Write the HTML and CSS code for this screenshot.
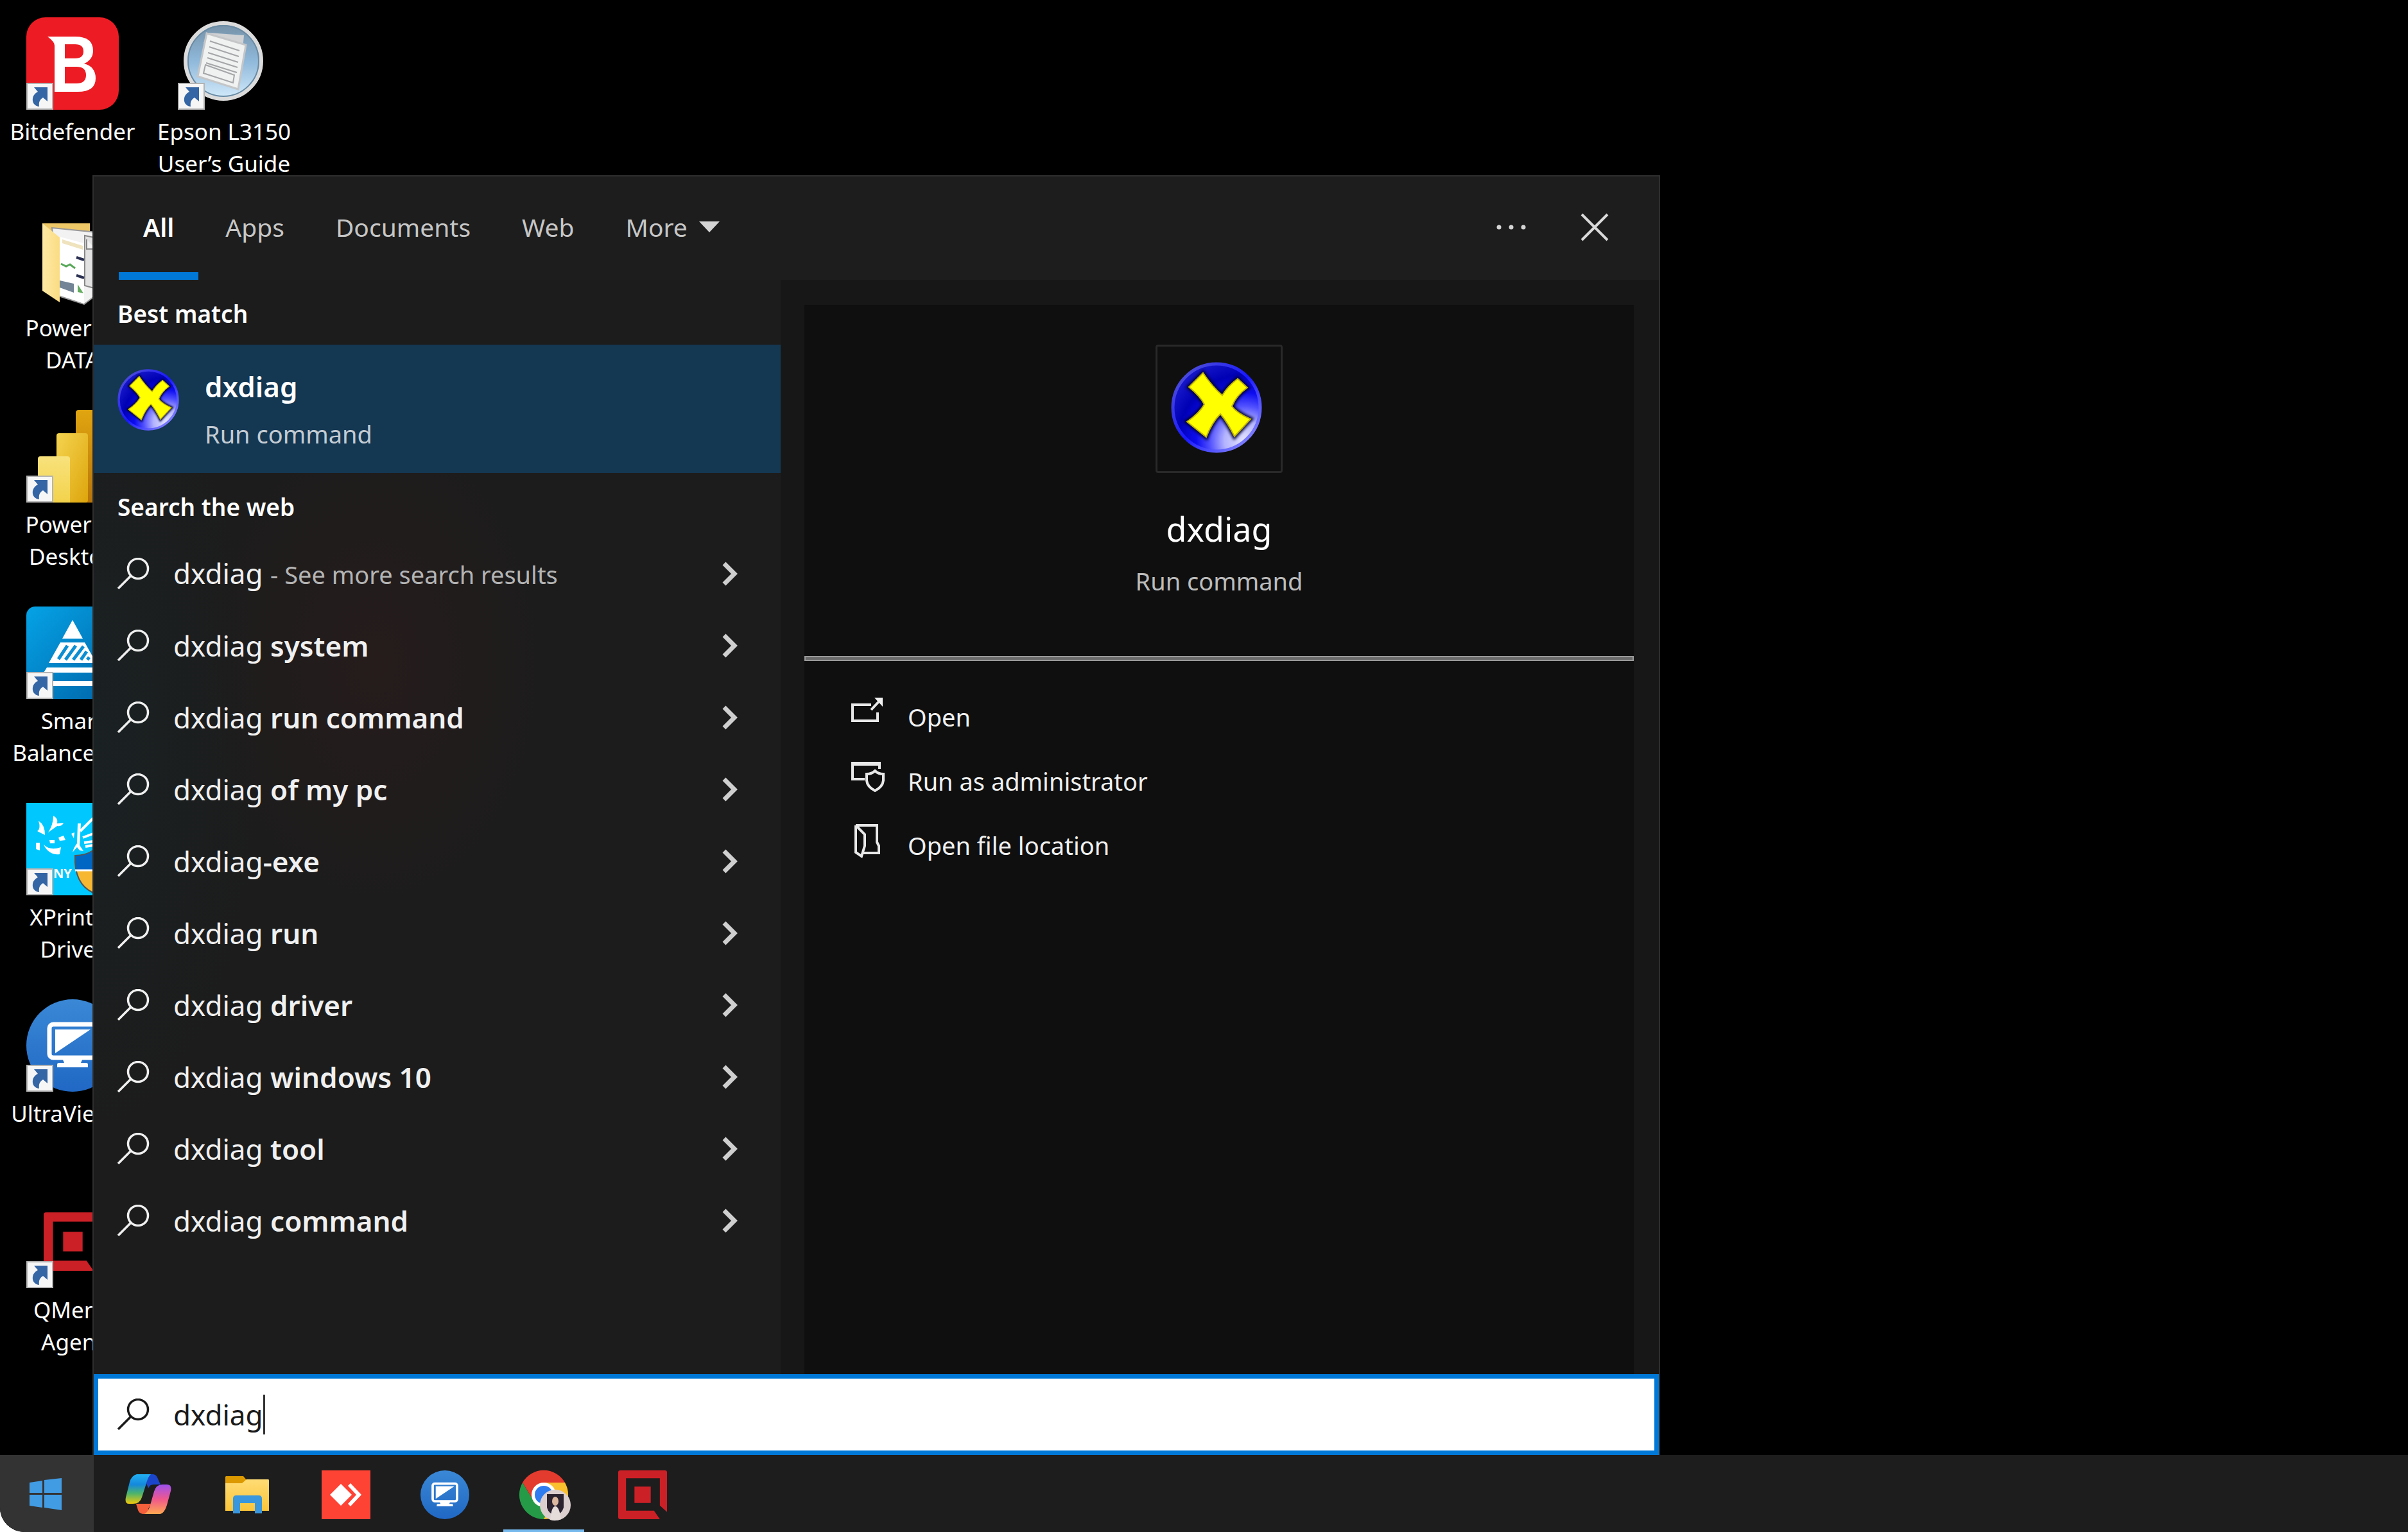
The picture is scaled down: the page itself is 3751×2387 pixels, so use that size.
FILE: index.html
```html
<!DOCTYPE html>
<html lang="en">
<head>
<meta charset="utf-8">
<title>Windows Search</title>
<link rel="stylesheet" href="styles.css">
</head>
<body>
<svg class="defs" aria-hidden="true">
  <defs>
    <radialGradient id="ball" cx=".82" cy=".88" r=".95">
      <stop offset="0" stop-color="#e4e4ff"/><stop offset=".24" stop-color="#b4b4ff"/>
      <stop offset=".42" stop-color="#5050ff"/><stop offset=".58" stop-color="#0c0cf0"/>
      <stop offset=".8" stop-color="#0000b4"/><stop offset="1" stop-color="#1414c8"/>
    </radialGradient>
    <linearGradient id="rim" x1="0" y1="0" x2="1" y2="1">
      <stop offset="0" stop-color="#5a5ad0"/><stop offset=".5" stop-color="#1818ff"/><stop offset="1" stop-color="#a0a0ff"/>
    </linearGradient>
    <filter id="soft" x="-20%" y="-20%" width="140%" height="140%"><feGaussianBlur stdDeviation="2"/></filter>
    <linearGradient id="uv" x1="0" y1="0" x2="0" y2="1"><stop offset="0" stop-color="#3a88d6"/><stop offset="1" stop-color="#2068c4"/></linearGradient>
    <linearGradient id="sb" x1="0" y1="0" x2="1" y2="1"><stop offset="0" stop-color="#05a3e6"/><stop offset="1" stop-color="#0064a8"/></linearGradient>
    <linearGradient id="bar1" x1="0" y1="0" x2="0" y2="1"><stop offset="0" stop-color="#f8e27c"/><stop offset="1" stop-color="#f3d24b"/></linearGradient>
    <linearGradient id="bar2" x1="0" y1="0" x2="1" y2="1"><stop offset="0" stop-color="#f5d450"/><stop offset="1" stop-color="#dda50c"/></linearGradient>
    <linearGradient id="bar3" x1="0" y1="0" x2="0" y2="1"><stop offset="0" stop-color="#e0a510"/><stop offset="1" stop-color="#b8740a"/></linearGradient>
    <linearGradient id="fold" x1="0" y1="0" x2="0" y2="1"><stop offset="0" stop-color="#ffdc74"/><stop offset="1" stop-color="#fbc53a"/></linearGradient>
    <linearGradient id="flap" x1="0" y1="0" x2="1" y2="0"><stop offset="0" stop-color="#fde9a4"/><stop offset="1" stop-color="#fbdc84"/></linearGradient>
    <linearGradient id="lens" x1="0" y1="0" x2="0" y2="1"><stop offset="0" stop-color="#7591a6"/><stop offset=".5" stop-color="#8fb8da"/><stop offset="1" stop-color="#d3ebfb"/></linearGradient>
    <linearGradient id="cpL" x1="0" y1="0" x2="0" y2="1"><stop offset="0" stop-color="#22b0f4"/><stop offset=".35" stop-color="#1488dc"/><stop offset=".65" stop-color="#4cb46c"/><stop offset="1" stop-color="#f0c80c"/></linearGradient>
    <linearGradient id="cpR" x1="0" y1="0" x2="0" y2="1"><stop offset="0" stop-color="#9c50ee"/><stop offset=".5" stop-color="#f0588c"/><stop offset="1" stop-color="#ffa850"/></linearGradient>
    <symbol id="shortcut" viewBox="0 0 42 42">
      <rect x="1" y="1" width="40" height="40" fill="#f6f6f6" stroke="#b4b4b4" stroke-width="2"/>
      <path d="M12 7h21v22l-7-6c-5 3-7 7-6 14C12 36 9 30 10 24c1-5 4-8 8-10z" fill="#3465a4"/>
    </symbol>
    <symbol id="search" viewBox="0 0 50 50">
      <circle cx="32" cy="17" r="15.500" fill="none" stroke="currentColor" stroke-width="3.500"/>
      <path d="M21 28L1 48" fill="none" stroke="currentColor" stroke-width="3.500"/>
    </symbol>
    <symbol id="chevron" viewBox="0 0 26 38"><path d="M4 3l16 16L4 35" fill="none" stroke="#cfcfcf" stroke-width="7"/></symbol>
    <symbol id="dx" viewBox="0 0 142 142">
      <circle cx="71" cy="71" r="68" fill="url(#ball)" stroke="url(#rim)" stroke-width="5"/>
      <path d="M50 17L28 39Q46 54 52 66Q44 80 25 93L55 117Q64 94 77 81Q88 94 99 116L124 89Q102 79 95 69Q102 52 119 40L104 26Q88 38 80 52Q64 38 50 17Z" fill="#00003c" stroke="#00003c" stroke-width="7" filter="url(#soft)"/>
      <path d="M50 17L28 39Q46 54 52 66Q44 80 25 93L55 117Q64 94 77 81Q88 94 99 116L124 89Q102 79 95 69Q102 52 119 40L104 26Q88 38 80 52Q64 38 50 17Z" fill="#ffff00" stroke="#c0b400" stroke-width="2"/>
    </symbol>
    <symbol id="ultra" viewBox="0 0 144 144">
      <circle cx="72" cy="72" r="72" fill="url(#uv)"/>
      <rect x="36" y="39" width="72" height="52" rx="6" fill="none" stroke="#fff" stroke-width="7"/>
      <path d="M45 47H100L45 84ZM56 92H88L85 99H93Q96 99 96 102V106H48V102Q48 99 51 99H59Z" fill="#fff"/>
    </symbol>
    <symbol id="qm" viewBox="0 0 75 75">
      <path d="M3 0H72Q75 0 75 3V64L64 54V12H12V62H55L64 75H3Q0 75 0 72V3Q0 0 3 0ZM25 25H50V50H25Z" fill="#cc2027"/>
    </symbol>
  </defs>
</svg>

<div class="screen">
  <main class="desktop">
    <ul class="icons">
      <li class="shortcut">
        <svg class="pic" viewBox="0 0 144 144"><rect width="144" height="144" rx="30" fill="#ed1c24"/>
          <path fill-rule="evenodd" fill="#fff" d="M33 30H76Q104 30 104 52Q104 66 90 72Q108 77 108 95Q108 116 80 116H44V44Q44 38 33 30ZM60 42V64H76Q89 64 89 53Q89 42 76 42ZM60 77V103H78Q93 103 93 90Q93 77 78 77Z"/>
          <use href="#shortcut" x="0" y="102" width="42" height="42"/></svg>
        <span>Bitdefender</span>
      </li>
      <li class="shortcut">
        <svg class="pic" viewBox="0 0 144 144">
          <path d="M25 15H99V130L25 120Z" fill="#eec766"/>
          <path d="M40 22L120 30V118L90 141L50 128Z" fill="#f2f2f2" stroke="#999" stroke-width="2"/>
          <path d="M91 34L120 40V120L91 112ZM94 40V55H108" fill="#e2e2e2" stroke="#888" stroke-width="2"/>
          <path d="M52 36L90 46V140L50 126Z" fill="#fff"/>
          <path d="M56 40L88 50V56L56 46Z" fill="#eee3bd"/>
          <path d="M54 78l8 4 6-3 8 6" stroke="#58a858" stroke-width="3" fill="none"/>
          <path d="M78 68l12 4M78 96l12 4" stroke="#2a3050" stroke-width="4"/>
          <path d="M52 104l22 5v14l-22-8z" fill="#728496"/><path d="M80 110l9 14-9-2z" fill="#64ac60"/>
          <path d="M25 15L52 37V138L25 120Z" fill="url(#flap)"/></svg>
        <span>Power BI<br>DATA</span>
      </li>
      <li class="shortcut">
        <svg class="pic" viewBox="0 0 144 144"><rect x="77" width="49" height="144" rx="4" fill="url(#bar3)"/>
          <rect x="47" y="36" width="49" height="108" rx="4" fill="url(#bar2)"/>
          <path d="M22 72h42q4 0 4 4v68H18V76q0-4 4-4z" fill="url(#bar1)"/>
          <use href="#shortcut" x="0" y="102" width="42" height="42"/></svg>
        <span>Power BI<br>Desktop</span>
      </li>
      <li class="shortcut">
        <svg class="pic" viewBox="0 0 144 144"><rect width="144" height="144" rx="14" fill="url(#sb)"/>
          <path d="M72 21L88 50H56ZM53 56H91L109 88H35ZM32 95H112L116 103H27ZM20 116H124V124H20Z" fill="#fff"/>
          <path d="M50 82L64 61M61 83L77 61M73 83L89 62M85 83L94 70M95 83l3-4" stroke="#0c8fd2" stroke-width="5"/>
          <use href="#shortcut" x="0" y="102" width="42" height="42"/></svg>
        <span>Smart<br>Balance 2.0</span>
      </li>
      <li class="shortcut">
        <svg class="pic" viewBox="0 0 144 144"><rect width="144" height="144" fill="#00c8ff"/>
          <g fill="#fff"><path d="M19 28q10 6 10 22l-12-6q6-4 2-16zM42 20q8 4 6 12l10-1q-2 6-10 5l-14 10q8-12 8-26zM15 62l6 0v12l-6-2zM27 65q10 10 27 4l-2 11q-17 2-25-15zM36 58l8 0v5h-7zM50 54l8-3 3 7-9 1zM70 48l5-2-1 9zM80 32l5 0-2 34 6 9-6-1-4-5-7 8q2-8 7-14z"/></g>
          <path d="M84 44L104 24M88 54L104 48M90 62L104 60M92 68L104 66" stroke="#fff" stroke-width="4"/>
          <text class="brand" x="42" y="117">NY</text>
          <path d="M76 82Q92 82 104 74Q116 82 136 82V106H76Z" fill="#0066c4"/><path d="M78 106H134Q128 130 104 140Q84 132 78 106Z" fill="#f7b731"/>
          <path d="M76 82Q92 82 104 74Q116 82 136 82Q138 124 104 140Q74 126 76 82Z" fill="none" stroke="#555" stroke-width="2"/><path d="M76 105H104" stroke="#fff" stroke-width="3"/>
          <use href="#shortcut" x="0" y="102" width="42" height="42"/></svg>
        <span>XPrinter<br>Driver</span>
      </li>
      <li class="shortcut">
        <svg class="pic" viewBox="0 0 144 144"><use href="#ultra"/><use href="#shortcut" x="0" y="102" width="42" height="42"/></svg>
        <span>UltraViewer</span>
      </li>
      <li class="shortcut">
        <svg class="pic" viewBox="0 0 144 144"><use href="#qm" x="27" y="26" width="91" height="91"/><use href="#shortcut" x="0" y="102" width="42" height="42"/></svg>
        <span>QMenu<br>Agent</span>
      </li>
      <li class="shortcut">
        <svg class="pic" viewBox="0 0 144 144"><circle cx="71" cy="68" r="59" fill="url(#lens)" stroke="#dcdcdc" stroke-width="6"/>
          <circle cx="71" cy="68" r="55" fill="none" stroke="#6a8ba4" stroke-width="2"/>
          <path d="M48 24L103 28L100 60L40 40Z" fill="#d0d2d4"/><path d="M45 25L106 43L94 112L31 92Z" fill="#f0f1f1" stroke="#c4c6c8" stroke-width="3"/>
          <path d="M50 37L96 52M49 46L95 61M47 55L94 70M46 63L93 78M44 71L92 86M43 74L88 90L86 102L40 87Z" fill="none" stroke="#a4a6a8" stroke-width="2"/>
          <use href="#shortcut" x="0" y="102" width="42" height="42"/></svg>
        <span>Epson L3150<br>User’s Guide</span>
      </li>
    </ul>

    <section class="panel" aria-label="Search">
      <header class="head">
        <nav class="tabs">
          <button class="tab active">All</button>
          <button class="tab">Apps</button>
          <button class="tab">Documents</button>
          <button class="tab">Web</button>
          <button class="tab">More <svg class="tri" viewBox="0 0 32 18"><path d="M0 0H32L16 17Z" fill="#d4d4d4"/></svg></button>
        </nav>
        <button class="tool" aria-label="Options"><svg class="dots" viewBox="0 0 48 48" fill="#d4d4d4"><circle cx="5" cy="24" r="3.500"/><circle cx="24" cy="24" r="3.500"/><circle cx="43" cy="24" r="3.500"/></svg></button>
        <button class="tool" aria-label="Close"><svg class="dots" viewBox="0 0 48 48"><path d="M4 4L44 44M44 4L4 44" stroke="#dadada" stroke-width="4"/></svg></button>
      </header>

      <div class="body">
        <div class="results">
          <h2 class="group">Best match</h2>
          <a class="best" href="#dxdiag">
            <svg class="best-pic" viewBox="0 0 142 142"><use href="#dx"/></svg>
            <span class="best-text"><strong>dxdiag</strong><span>Run command</span></span>
          </a>
          <h2 class="group">Search the web</h2>
          <ul class="web">
            <li><a href="#q0"><svg class="glass"><use href="#search"/></svg><span>dxdiag <small>- See more search results</small></span></a><button aria-label="Preview"><svg class="chev"><use href="#chevron"/></svg></button></li>
            <li><a href="#q1"><svg class="glass"><use href="#search"/></svg><span>dxdiag <b>system</b></span></a><button aria-label="Preview"><svg class="chev"><use href="#chevron"/></svg></button></li>
            <li><a href="#q2"><svg class="glass"><use href="#search"/></svg><span>dxdiag <b>run command</b></span></a><button aria-label="Preview"><svg class="chev"><use href="#chevron"/></svg></button></li>
            <li><a href="#q3"><svg class="glass"><use href="#search"/></svg><span>dxdiag <b>of my pc</b></span></a><button aria-label="Preview"><svg class="chev"><use href="#chevron"/></svg></button></li>
            <li><a href="#q4"><svg class="glass"><use href="#search"/></svg><span>dxdiag<b>-exe</b></span></a><button aria-label="Preview"><svg class="chev"><use href="#chevron"/></svg></button></li>
            <li><a href="#q5"><svg class="glass"><use href="#search"/></svg><span>dxdiag <b>run</b></span></a><button aria-label="Preview"><svg class="chev"><use href="#chevron"/></svg></button></li>
            <li><a href="#q6"><svg class="glass"><use href="#search"/></svg><span>dxdiag <b>driver</b></span></a><button aria-label="Preview"><svg class="chev"><use href="#chevron"/></svg></button></li>
            <li><a href="#q7"><svg class="glass"><use href="#search"/></svg><span>dxdiag <b>windows 10</b></span></a><button aria-label="Preview"><svg class="chev"><use href="#chevron"/></svg></button></li>
            <li><a href="#q8"><svg class="glass"><use href="#search"/></svg><span>dxdiag <b>tool</b></span></a><button aria-label="Preview"><svg class="chev"><use href="#chevron"/></svg></button></li>
            <li><a href="#q9"><svg class="glass"><use href="#search"/></svg><span>dxdiag <b>command</b></span></a><button aria-label="Preview"><svg class="chev"><use href="#chevron"/></svg></button></li>
          </ul>
        </div>

        <div class="preview">
          <article class="card">
            <div class="hero">
              <div class="frame"><svg class="hero-pic" viewBox="0 0 142 142"><use href="#dx"/></svg></div>
              <h1>dxdiag</h1>
              <p>Run command</p>
            </div>
            <hr>
            <div class="actions">
              <button><svg class="act" viewBox="0 0 54 54"><path d="M32 14H3V39H42V26M32 22L46 7" /><path d="M37 3H50V17Z" fill="#f0f0f0" stroke="none"/></svg>Open</button>
              <button><svg class="act" viewBox="0 0 54 54"><path d="M22 30H3V5H45V14M3 7H45M38 17Q43 22 51 22V32Q50 42 38 48Q26 42 25 32V22Q33 22 38 17Z"/></svg>Run as administrator</button>
              <button><svg class="act" viewBox="0 0 54 54"><path d="M8 2H41V28L44 34V45H20M8 2L22 16V34L17 50L8 44V2"/></svg>Open file location</button>
            </div>
          </article>
        </div>
      </div>

      <label class="searchbox">
        <svg class="glass"><use href="#search"/></svg>
        <input type="text" value="dxdiag" aria-label="Type here to search"><span class="caret"></span>
      </label>
    </section>
  </main>

  <footer class="taskbar">
    <button class="start" aria-label="Start"><svg width="50" height="50" viewBox="0 0 50 50" fill="#429ce3"><path d="M0 7L20 4V23H0ZM23 3L50 0V23H23ZM0 26H20V46L0 43ZM23 26H50V50L23 46Z"/></svg></button>
    <button class="app" aria-label="Copilot"><svg width="72" height="64" viewBox="0 0 72 64">
      <path d="M36 0H42Q48 0 50 5L55 16H44Q38 16 36 22L33 14Z" fill="#1b46cc"/>
      <path d="M36 62H30Q22 62 20 56L17 46L40 46L36 54Z" fill="#f4603c"/>
      <path d="M18 0H40Q36 3 33 14L26 36Q23 46 12 46H6Q-1 46 1 36L7 12Q10 2 18 0Z" fill="url(#cpL)"/>
      <path d="M54 62H30Q36 59 39 48L45 27Q48 16 58 16H65Q73 16 71 26L65 48Q61 61 54 62Z" fill="url(#cpR)"/></svg></button>
    <button class="app" aria-label="File Explorer"><svg width="70" height="60" viewBox="0 0 70 60">
      <path d="M2 1H29L35 8V18H1V2Z" fill="#dc9a00"/><path d="M1 12H27L34 6H68Q69 6 69 8V55H1Z" fill="url(#fold)"/>
      <path d="M13 59V36Q13 31 18 31H53Q58 31 58 36V59H47V43H24V59Z" fill="#3b97dd"/></svg></button>
    <button class="app" aria-label="AnyDesk"><svg width="76" height="76" viewBox="0 0 76 76"><rect width="76" height="76" fill="#fe4335"/>
      <path d="M13 38L30 21L47 38L30 55ZM41 24L45 20L62 38L45 56L41 52L54 38Z" fill="#fff"/></svg></button>
    <button class="app" aria-label="UltraViewer"><svg width="76" height="76"><use href="#ultra"/></svg></button>
    <button class="app running" aria-label="Google Chrome"><svg width="84" height="84" viewBox="0 0 84 84">
      <path d="M42 42H75A38 38 0 0 1 42 80Z" fill="#fbc02d"/><path d="M42 23H75A38 38 0 0 1 42 80L58 51Z" fill="#fbc02d"/><path d="M42 61L26 51L9 23A38 38 0 0 0 42 80L58 51Z" fill="#259b48"/>
      <path d="M9 23A38 38 0 0 1 75 23H42L26 51Z" fill="#e33b2e"/><circle cx="42" cy="42" r="19" fill="#fff"/><circle cx="42" cy="42" r="14" fill="#2f7bf0"/>
      <circle cx="60" cy="58" r="24" fill="#dccfcf"/><path d="M47 41H73V62Q70 72 60 74Q50 72 47 62Z" fill="#2b2430"/><ellipse cx="60" cy="52" rx="5" ry="7" fill="#dcb8a0"/><path d="M52 81Q54 60 60 60Q66 60 69 80Q60 84 52 81Z" fill="#e6dcda"/></svg></button>
    <button class="app" aria-label="QMenu Agent"><svg width="76" height="76"><use href="#qm"/></svg></button>
  </footer>
</div>
</body>
</html>
```
FILE: styles.css
```css
* { box-sizing: border-box; }

body {
  margin: 0;
  background: #fff;
  color: #f0f0f0;
  font: 38px/50px "Noto Sans", "Open Sans", sans-serif;
}

ul { margin: 0; padding: 0; list-style: none; }
h1, h2, p { margin: 0; font-weight: 400; }
a { color: inherit; text-decoration: none; }
button { border: 0; padding: 0; background: none; color: inherit; font: inherit; }
svg { display: block; flex: none; }
.defs { position: absolute; width: 0; height: 0; }

.screen {
  display: flex;
  flex-direction: column;
  min-height: 100vh;
  overflow: hidden;
  border-radius: 0 0 0 38px;
  background: #000;
}

.desktop { position: relative; flex: 1; }

/* Desktop shortcuts */
.icons {
  display: grid;
  grid-auto-flow: column;
  grid-template-rows: repeat(7, 306px);
  grid-auto-columns: 226px;
  justify-content: start;
  column-gap: 10px;
  padding-top: 27px;
}
.shortcut {
  display: flex;
  flex-direction: column;
  align-items: center;
  gap: 9px;
  color: #fff;
  font-size: 35px;
  text-align: center;
  white-space: nowrap;
}
.pic { width: 144px; height: 144px; }
.brand { fill: #fff; font: 700 20px "Noto Sans", sans-serif; }

/* Search flyout, floating over the desktop */
.panel {
  position: absolute;
  top: 273px;
  bottom: 0;
  left: 144px;
  display: flex;
  flex-direction: column;
  width: min(2442px, calc(100vw - 144px));
  border: 2px solid #2e2e2e;
  border-bottom: 0;
  background: #1c1c1c;
}

.head {
  display: flex;
  align-items: center;
  height: 161px;
  padding: 0 54px 0 39px;
  background: #1d1d1d;
}
.tabs { display: flex; flex: 1; gap: 4px; height: 100%; }
.tab {
  display: flex;
  align-items: center;
  gap: 18px;
  padding: 8px 38px 12px;
  color: #c6c6c6;
  font-size: 39px;
}
.tab.active {
  padding-bottom: 0;
  border-bottom: 12px solid #0078d7;
  color: #fff;
  font-weight: 600;
}
.tri { width: 32px; height: 18px; }
.tool { display: grid; place-items: center; width: 92px; height: 96px; padding-bottom: 4px; }
.tool + .tool { margin-left: 38px; }
.dots { width: 48px; height: 48px; }

.body { display: flex; flex: 1; }

.results {
  display: flex;
  flex-direction: column;
  width: 1070px;
  background:
    radial-gradient(ellipse 280px 400px at 440px 600px, #261c1c, transparent),
    radial-gradient(ellipse 260px 600px at 0 720px, #1a2123, transparent),
    #1c1c1c;
}
.group {
  display: flex;
  align-items: center;
  height: 101px;
  padding: 4px 37px 0;
  color: #fff;
  font-size: 37px;
  font-weight: 600;
}
.best {
  display: flex;
  gap: 40px;
  height: 200px;
  padding: 38px 37px;
  background: #143752;
}
.best-pic { width: 96px; height: 96px; }
.best-text { display: flex; flex-direction: column; gap: 22px; color: #c2cbd3; }
.best-text strong { color: #fff; font-size: 44px; font-weight: 600; line-height: 54px; }

.web li { display: flex; align-items: center; height: 112px; padding-right: 66px; }
.web a { display: flex; flex: 1; align-items: center; gap: 37px; padding-left: 37px; font-size: 44px; }
.web b { font-weight: 600; }
.web small { color: #b4b4b4; font-size: 38px; }
.glass { width: 50px; height: 50px; }
.chev { width: 26px; height: 38px; }

.preview { display: flex; flex: 1; padding: 39px 39px 0 37px; background: #171717; }
.card { flex: 1; background: #0f0f0f; }
.hero { display: flex; flex-direction: column; align-items: center; height: 547px; padding-top: 62px; }
.frame {
  display: grid;
  place-items: center;
  width: 198px;
  height: 200px;
  padding: 0 8px 4px 0;
  border: 3px solid #292929;
  border-radius: 4px;
}
.hero-pic { width: 142px; height: 142px; }
.hero h1 { margin-top: 52px; color: #fff; font-size: 52px; line-height: 70px; }
.hero p { margin-top: 21px; color: #bcbcbc; }
hr { height: 8px; margin: 0; border: 2px solid #9a9a9a; background: #6a6a6a; }
.actions { display: flex; flex-direction: column; padding: 37px 72px; }
.actions button { display: flex; align-items: center; gap: 35px; height: 100px; text-align: left; }
.act { width: 54px; height: 66px; padding-bottom: 12px; fill: none; stroke: #e8e8e8; stroke-width: 4px; }

.searchbox {
  display: flex;
  align-items: center;
  height: 126px;
  padding-left: 30px;
  border: 7px solid #0078d7;
  background: #fff;
  color: #1a1a1a;
}
.searchbox input {
  field-sizing: content;
  margin-left: 37px;
  padding: 0;
  border: 0;
  outline: 0;
  background: none;
  color: inherit;
  font: 44px/60px "Noto Sans", "Open Sans", sans-serif;
}
.caret { width: 3px; height: 62px; background: #333; }

/* Taskbar */
.taskbar { display: flex; height: 120px; background: #1d1d1d; }
.start { display: grid; place-items: center; width: 146px; padding: 2px 4px 0 0; margin-right: 8px; background: #333; }
.app { display: grid; place-items: center; width: 154px; padding-top: 3px; }
.running {
  background: linear-gradient(#76b9ed, #76b9ed) bottom / 126px 4px no-repeat;
}
```
